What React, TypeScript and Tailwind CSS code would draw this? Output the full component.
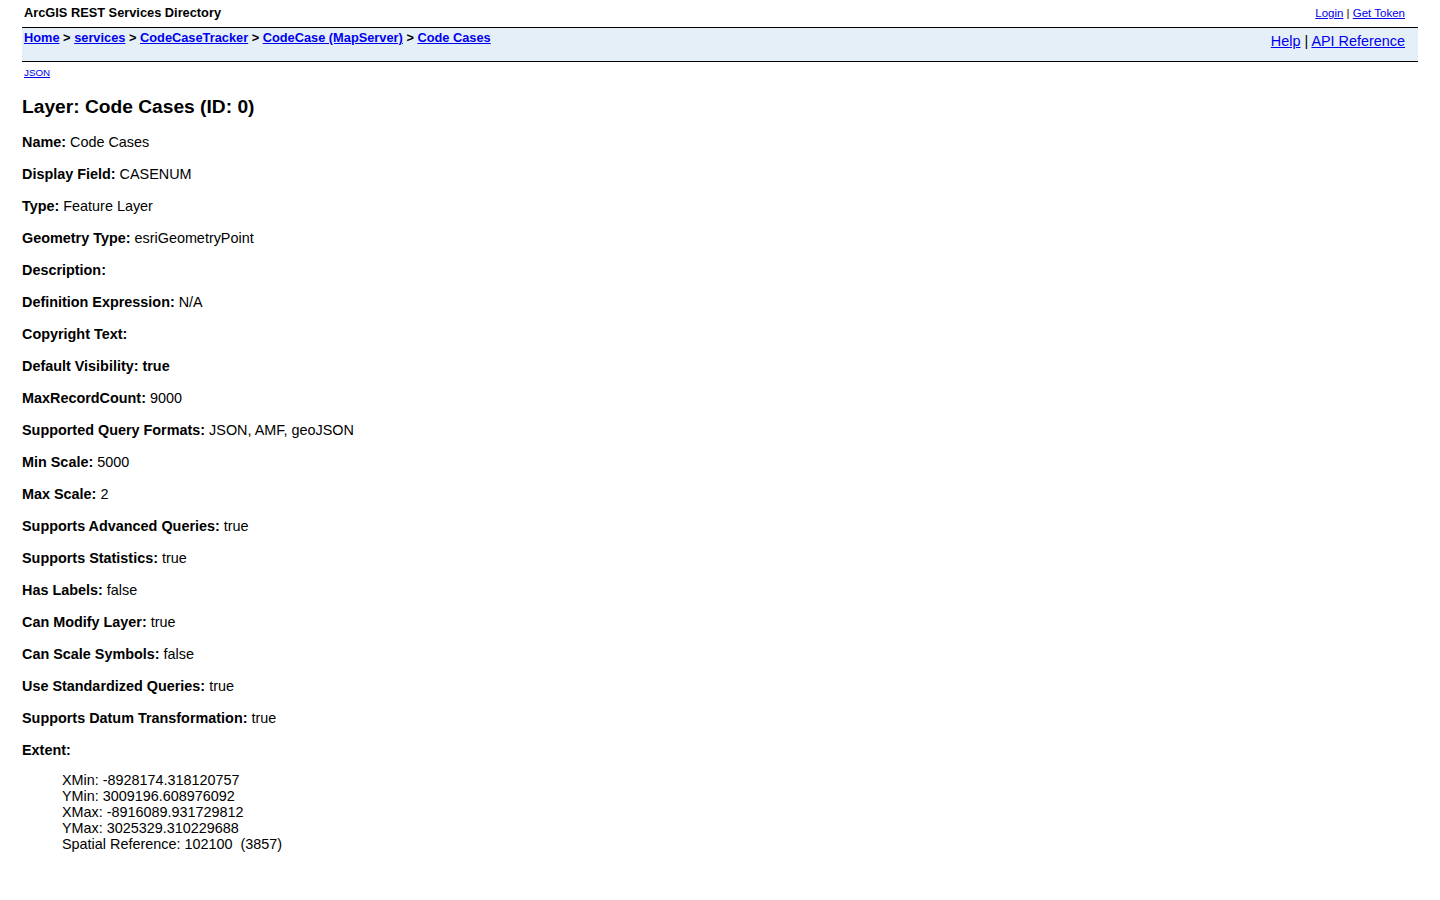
import React from "react";

const rows: [string, string][] = [
  ["Name:", "Code Cases"],
  ["Display Field:", "CASENUM"],
  ["Type:", "Feature Layer"],
  ["Geometry Type:", "esriGeometryPoint"],
  ["Description:", ""],
  ["Definition Expression:", "N/A"],
  ["Copyright Text:", ""],
  ["Default Visibility: true", ""],
  ["MaxRecordCount:", "9000"],
  ["Supported Query Formats:", "JSON, AMF, geoJSON"],
  ["Min Scale:", "5000"],
  ["Max Scale:", "2"],
  ["Supports Advanced Queries:", "true"],
  ["Supports Statistics:", "true"],
  ["Has Labels:", "false"],
  ["Can Modify Layer:", "true"],
  ["Can Scale Symbols:", "false"],
  ["Use Standardized Queries:", "true"],
  ["Supports Datum Transformation:", "true"],
];

const link = "text-[#0000ee] underline";

export default function App() {
  return (
    <div className="min-h-[900px] bg-white text-black px-[22px] font-['Liberation_Sans',Arial,sans-serif]">
      <div className="flex justify-between items-end h-[27px] pb-[6px] px-[2px]">
        <div className="text-[12.8px] font-bold leading-[15px] pb-[1px]">ArcGIS REST Services Directory</div>
        <div className="text-[11.5px] leading-[13px] pr-[11px] pb-[1px]">
          <a href="#" className={link}>Login</a> | <a href="#" className={link}>Get Token</a>
        </div>
      </div>
      <div className="border-t border-b border-black bg-[#e5eff7] h-[35px] flex justify-between px-[2px]">
        <div className="text-[12.8px] font-bold leading-[15px] pt-[2px]">
          <a href="#" className={link}>Home</a> &gt; <a href="#" className={link}>services</a> &gt;{" "}
          <a href="#" className={link}>CodeCaseTracker</a> &gt; <a href="#" className={link}>CodeCase (MapServer)</a> &gt;{" "}
          <a href="#" className={link}>Code Cases</a>
        </div>
        <div className="text-[14.4px] leading-[17px] pt-[5px] pr-[11px]">
          <a href="#" className={link}>Help</a> | <a href="#" className={link}>API Reference</a>
        </div>
      </div>
      <div className="pt-[5px] pb-[1px] px-[2px] text-[9.8px] leading-[12px]">
        <a href="#" className={link}>JSON</a>
      </div>
      <h2 className="text-[19.2px] font-bold leading-[22px] mt-[16px] mb-[15px]">Layer: Code Cases (ID: 0)</h2>
      <div className="text-[14.4px] leading-[18px]">
        {rows.map(([k, v], i) => (
          <p key={i} className="mb-[14px]">
            <b>{k}</b>
            {v ? " " + v : ""}
          </p>
        ))}
        <p className="mb-[13px]"><b>Extent:</b></p>
        <div className="pl-[40px] leading-[16px]">
          <div>XMin: -8928174.318120757</div>
          <div>YMin: 3009196.608976092</div>
          <div>XMax: -8916089.931729812</div>
          <div>YMax: 3025329.310229688</div>
          <div className="whitespace-pre">Spatial Reference: 102100  (3857)</div>
        </div>
      </div>
    </div>
  );
}
